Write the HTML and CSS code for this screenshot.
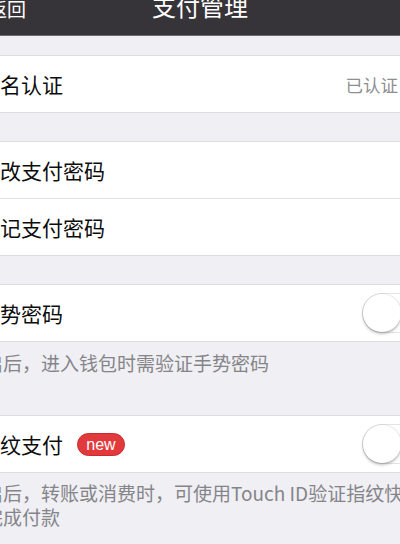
FILE: index.html
```html
<!DOCTYPE html>
<html lang="zh-CN">
<head>
<meta charset="utf-8">
<title>支付管理</title>
<link rel="stylesheet" href="styles.css">
</head>
<body>
<div class="screen">
  <header class="nav">
    <div class="nav-back">返回</div>
    <div class="nav-title">支付管理</div>
  </header>

  <section class="group group-first">
    <div class="row">
      <span class="label">实名认证</span>
      <span class="value">已认证</span>
    </div>
  </section>

  <section class="group">
    <div class="row">
      <span class="label">修改支付密码</span>
    </div>
    <div class="row row-sep">
      <span class="label">忘记支付密码</span>
    </div>
  </section>

  <section class="group">
    <div class="row">
      <span class="label">手势密码</span>
      <span class="switch"><span class="knob"></span></span>
    </div>
  </section>
  <p class="footer">开启后，进入钱包时需验证手势密码</p>

  <section class="group group-after-footer">
    <div class="row">
      <span class="label">指纹支付<span class="badge">new</span></span>
      <span class="switch"><span class="knob"></span></span>
    </div>
  </section>
  <p class="footer">开启后，转账或消费时，可使用Touch ID验证指纹快<br>速完成付款</p>
</div>
</body>
</html>
```

FILE: styles.css
```css
html, body {
  margin: 0;
  padding: 0;
  width: 400px;
  height: 544px;
  overflow: hidden;
  background: #efeff4;
}

.screen {
  width: 484px;
  margin-left: -42px;
  font-family: "Noto Sans CJK SC", "Noto Sans", sans-serif;
  color: #0d0d0d;
}

.nav {
  position: relative;
  height: 35px;
  background: #363339;
  border-bottom: 1px solid #6a686d;
  color: #fff;
  display: flex;
  justify-content: center;
  align-items: flex-end;
}

.nav-title {
  font-size: 24px;
  line-height: 24px;
  margin-bottom: 17px;
}

.nav-back {
  position: absolute;
  left: 30px;
  top: -1px;
  font-size: 19px;
  line-height: 20px;
}

.group {
  background: #fff;
  border-top: 1px solid #dddde1;
  border-bottom: 1px solid #dddde1;
  margin-top: 28px;
}

.group-first {
  margin-top: 19px;
}

.group-after-footer {
  margin-top: 40px;
}

.row {
  height: 56px;
  padding: 0 14px 0 21px;
  display: flex;
  align-items: center;
  justify-content: space-between;
}

.row-sep {
  border-top: 1px solid #e2e2e6;
}

.label {
  font-size: 21px;
  display: flex;
  align-items: center;
}

.value {
  font-size: 17.5px;
  color: #8e8e93;
  margin-right: 30px;
}

.badge {
  margin-left: 14px;
  height: 23px;
  width: 48px;
  border-radius: 12px;
  background: #e2393c;
  border: 1px solid #c92a2f;
  box-sizing: border-box;
  color: #fff;
  font-family: "Liberation Sans", Arial, sans-serif;
  font-size: 16px;
  line-height: 21px;
  text-align: center;
}

.switch {
  width: 66px;
  height: 40px;
  border-radius: 20px;
  box-sizing: border-box;
  border: 1.5px solid #e4e4e7;
  background: #fff;
  position: relative;
}

.knob {
  position: absolute;
  left: -0.5px;
  top: -0.5px;
  width: 38px;
  height: 38px;
  border-radius: 50%;
  background: #fff;
  box-shadow: 0 2px 3px rgba(0, 0, 0, 0.25), 0 0 0 1px rgba(0, 0, 0, 0.06);
}

.footer {
  margin: 0;
  padding: 9px 0 0 7px;
  font-size: 19px;
  line-height: 24px;
  color: #858589;
  white-space: nowrap;
}

.group-after-footer + .footer {
  padding-top: 8px;
}
```
